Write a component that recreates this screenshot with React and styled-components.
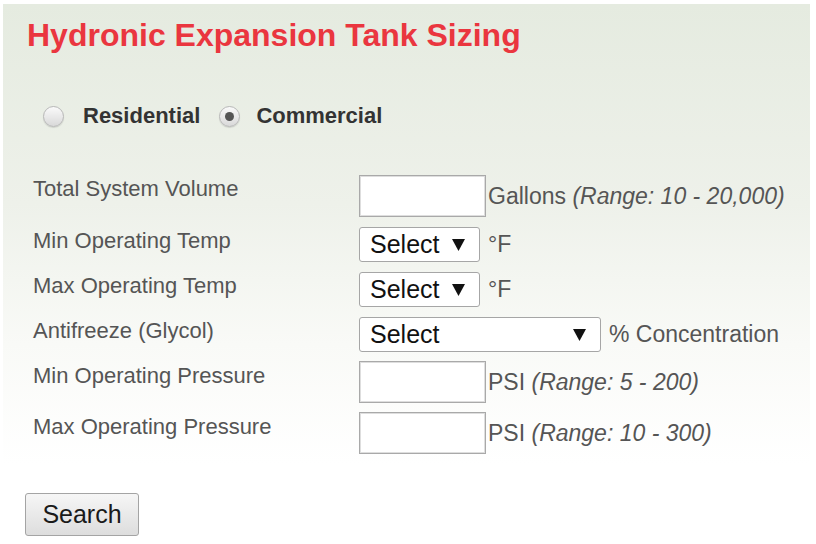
import styled, { createGlobalStyle } from 'styled-components';

const GlobalStyle = createGlobalStyle`
  body {
    margin: 0;
    background: #ffffff;
    font-family: 'Liberation Sans', Arial, sans-serif;
  }
`;

const Panel = styled.div`
  margin: 4px 6px 0 3px;
  padding: 12px 0 7px 22px;
  background: linear-gradient(to bottom, #e5ebe0 0px, #eef1ea 200px, #f9faf7 340px, #ffffff 460px);
`;

const Title = styled.h1`
  margin: 0;
  padding-left: 2px;
  font-size: 32px;
  line-height: 38px;
  font-weight: bold;
  color: #ea363f;
`;

const RadioRow = styled.div`
  display: flex;
  align-items: center;
  height: 30px;
  margin: 47px 0 0 18px;
`;

const RadioOption = styled.label`
  display: flex;
  align-items: center;
  margin-right: 19px;
  font-size: 22px;
  font-weight: bold;
  color: #333333;
`;

const RadioDot = styled.span`
  position: relative;
  width: 19px;
  height: 19px;
  margin-right: ${(p) => (p.$checked ? 16 : 19)}px;
  border-radius: 50%;
  border: 1px solid #b8b8b8;
  background: linear-gradient(to bottom, #fafafa, #d9d9d9);
  box-shadow: 0 1px 1px rgba(0, 0, 0, 0.12);

  &::after {
    content: '';
    display: ${(p) => (p.$checked ? 'block' : 'none')};
    position: absolute;
    left: 5px;
    top: 5px;
    width: 9px;
    height: 9px;
    border-radius: 50%;
    background: #555555;
  }
`;

const Form = styled.div`
  display: grid;
  grid-template-columns: 326px auto;
  row-gap: 10px;
  margin: 44px 0 0 8px;
`;

const Label = styled.div`
  padding-top: 2px;
  font-size: 22px;
  line-height: 24px;
  color: #555555;
`;

const Field = styled.div`
  display: flex;
  align-items: center;
  margin-top: ${(p) => (p.$tight ? -1 : 0)}px;
`;

const TextBox = styled.input`
  box-sizing: border-box;
  width: 127px;
  height: 42px;
  margin: 0;
  border: 1px solid #a9a9a9;
  box-shadow: inset 0 0 0 1px #dedede;
  background: #ffffff;
`;

const SelectBox = styled.div`
  box-sizing: border-box;
  display: flex;
  align-items: center;
  justify-content: space-between;
  width: ${(p) => p.$width}px;
  height: 35px;
  padding: 0 14px 0 10px;
  border: 1px solid #a6a6a6;
  border-radius: 3px;
  background: #ffffff;
  font-size: 25px;
  color: #111111;
`;

const Suffix = styled.span`
  margin-left: ${(p) => p.$gap}px;
  font-size: 23px;
  color: #555555;

  i {
    font-style: italic;
  }
`;

const SearchButton = styled.button`
  box-sizing: border-box;
  width: 114px;
  height: 43px;
  margin-top: 39px;
  padding: 0;
  border: 1px solid #a4a4a4;
  border-radius: 3px;
  background: linear-gradient(to bottom, #f6f6f6, #dddddd);
  font-family: 'Liberation Sans', Arial, sans-serif;
  font-size: 25px;
  color: #1a1a1a;
`;

const Arrow = () => (
  <svg width="13" height="12" viewBox="0 0 13 12">
    <path d="M0 0 H13 L6.5 12 Z" fill="#111" />
  </svg>
);

const Select = ({ width }) => (
  <SelectBox $width={width}>
    <span>Select</span>
    <Arrow />
  </SelectBox>
);

const rows = [
  { label: 'Total System Volume', kind: 'input', unit: 'Gallons', range: '(Range: 10 - 20,000)' },
  { label: 'Min Operating Temp', kind: 'select', width: 121, unit: '°F' },
  { label: 'Max Operating Temp', kind: 'select', width: 121, unit: '°F' },
  { label: 'Antifreeze (Glycol)', kind: 'select', width: 242, unit: '% Concentration' },
  { label: 'Min Operating Pressure', kind: 'input', unit: 'PSI', range: '(Range: 5 - 200)', tight: true },
  { label: 'Max Operating Pressure', kind: 'input', unit: 'PSI', range: '(Range: 10 - 300)', tight: true },
];

export default function App() {
  return (
    <>
      <GlobalStyle />
      <Panel>
        <Title>Hydronic Expansion Tank Sizing</Title>
        <RadioRow>
          <RadioOption>
            <RadioDot />
            Residential
          </RadioOption>
          <RadioOption>
            <RadioDot $checked />
            Commercial
          </RadioOption>
        </RadioRow>
        <Form>
          {rows.map((r) => (
            <>
              <Label key={r.label}>{r.label}</Label>
              <Field key={r.label + '-f'} $tight={r.tight}>
                {r.kind === 'input' ? <TextBox type="text" /> : <Select width={r.width} />}
                <Suffix $gap={r.kind === 'input' ? 2 : 8}>
                  {r.unit} {r.range && <i>{r.range}</i>}
                </Suffix>
              </Field>
            </>
          ))}
        </Form>
        <SearchButton>Search</SearchButton>
      </Panel>
    </>
  );
}
